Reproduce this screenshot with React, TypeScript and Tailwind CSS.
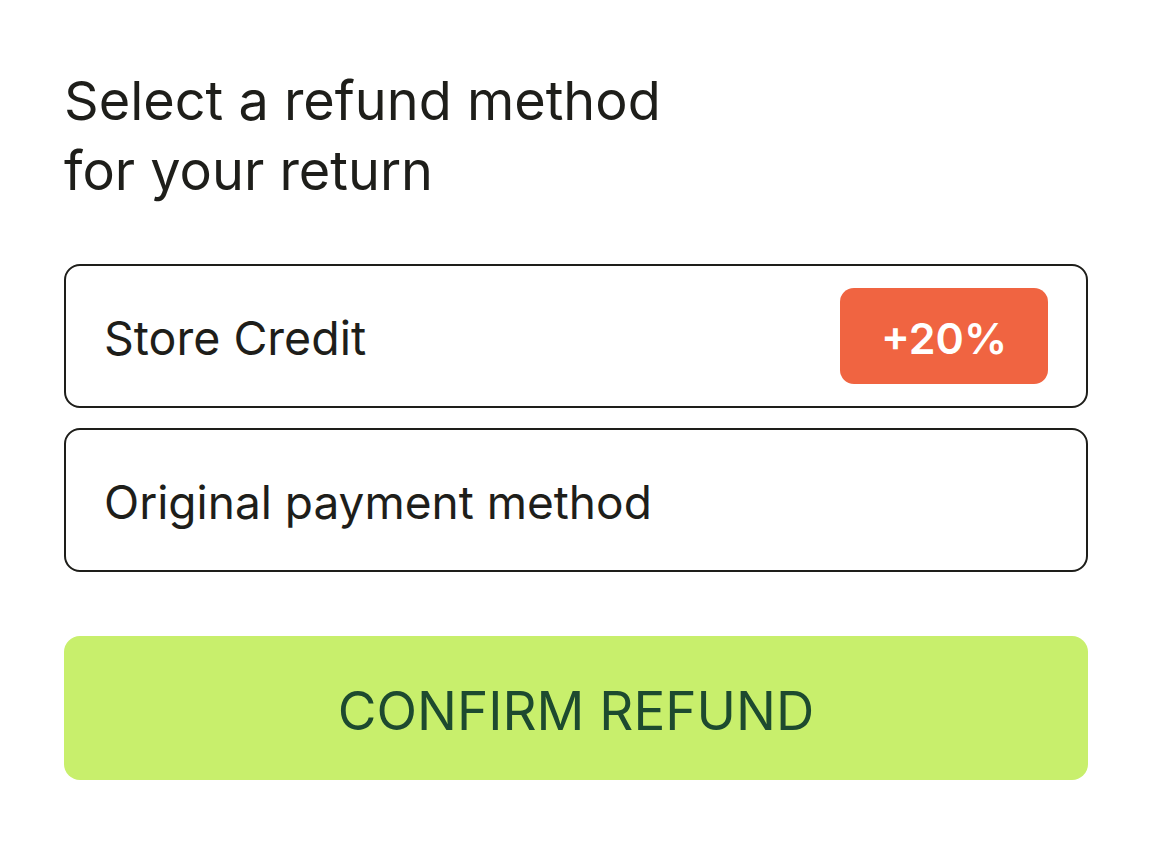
export default function App() {
  return (
    <div className="min-h-screen w-full bg-white px-16 pt-[66px] font-['Inter',sans-serif] text-[#1e1e1a]">
      <h1 className="text-[54px] leading-[70px] font-normal">
        Select a refund method
        <br />
        for your return
      </h1>

      <div className="mt-[58px] flex flex-col gap-5">
        <div className="flex h-[144px] items-center justify-between rounded-2xl border-2 border-[#1e1e1a] pl-[38px] pr-[38px]">
          <span className="pt-1 text-[46.5px] leading-none">Store Credit</span>
          <span className="flex h-24 w-[208px] items-center justify-center rounded-[14px] bg-[#f06441] pt-1 text-[43px] font-semibold leading-none text-white">
            +20%
          </span>
        </div>
        <div className="flex h-[144px] items-center rounded-2xl border-2 border-[#1e1e1a] pl-[38px]">
          <span className="pt-1 text-[46px] leading-none">Original payment method</span>
        </div>
      </div>

      <button className="mt-[64px] flex h-[144px] w-full items-center justify-center rounded-2xl bg-[#c8ef6c] pt-[6px] text-[53px] leading-none text-[#1d4a2f]">
        CONFIRM REFUND
      </button>
    </div>
  );
}
